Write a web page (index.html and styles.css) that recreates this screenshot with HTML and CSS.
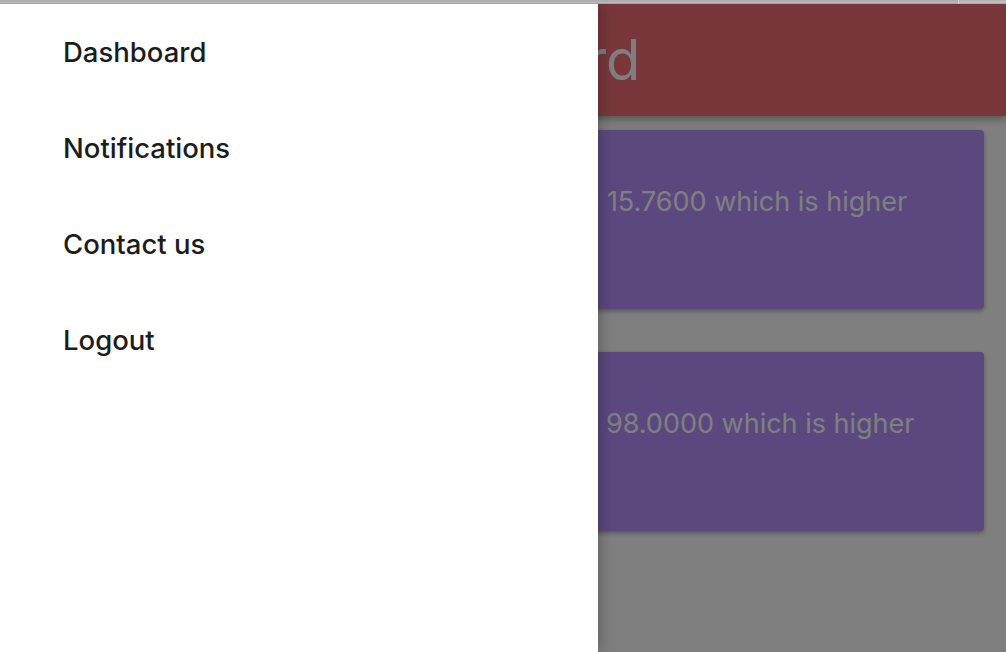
FILE: index.html
```html
<!DOCTYPE html>
<html lang="en">
<head>
<meta charset="utf-8">
<title>Dashboard</title>
<link rel="stylesheet" href="styles.css">
</head>
<body>
<div class="chrome">
  <div class="chrome-main"></div>
  <div class="chrome-end"></div>
</div>
<div class="viewport">
  <div class="page">
    <header class="header"><h1 class="title">Dashboard</h1></header>
    <main class="cards">
      <section class="card"><p class="msg">Sensor A reading is 15.7600 which is higher<br>than the limit</p></section>
      <section class="card"><p class="msg">Sensor B reading is 98.0000 which is higher<br>than the limit</p></section>
    </main>
  </div>
  <div class="scrim"></div>
  <nav class="drawer">
    <a class="nav-item" href="#">Dashboard</a>
    <a class="nav-item" href="#">Notifications</a>
    <a class="nav-item" href="#">Contact us</a>
    <a class="nav-item" href="#">Logout</a>
  </nav>
</div>
</body>
</html>
```
FILE: styles.css
```css
* { box-sizing: border-box; }
html, body { margin: 0; padding: 0; }
body {
  width: 1006px;
  height: 652px;
  overflow: hidden;
  font-family: Inter, "Noto Sans", sans-serif;
  background: #808080;
}
.chrome {
  display: flex;
  height: 4px;
}
.chrome-main {
  flex: 1;
  background: linear-gradient(#a9a9a9, #b9b9b9 60%, #9d9d9d);
}
.chrome-end {
  width: 48px;
  border-left: 1px solid #cfcfcf;
  background: linear-gradient(#b2b2b2, #c0c0c0 60%, #a5a5a5);
}
.viewport {
  position: relative;
  height: 648px;
  overflow: hidden;
}
.page {
  height: 100%;
  background: #ffffff;
}
.header {
  height: 112px;
  background: #f26e76;
  box-shadow: 0 3px 8px rgba(0,0,0,0.35);
  display: flex;
  align-items: center;
  justify-content: center;
  padding-right: 14px;
}
.title {
  margin: 0;
  font-weight: 400;
  font-size: 56px;
  color: #ffffff;
}
.cards {
  display: flex;
  flex-direction: column;
  gap: 43px;
  padding: 14px 22px 0 22px;
}
.card {
  height: 179px;
  background: #b691ff;
  border-radius: 4px;
  box-shadow: 0 2px 5px rgba(0,0,0,0.35);
  padding: 54px 24px 0 329px;
}
.msg {
  margin: 0;
  font-size: 27px;
  line-height: 36px;
  color: #ffffff;
}
.scrim {
  position: absolute;
  inset: 0;
  background: rgba(0,0,0,0.5);
}
.drawer {
  position: absolute;
  top: 0;
  left: 0;
  bottom: 0;
  width: 598px;
  background: #ffffff;
  box-shadow: 2px 0 14px rgba(0,0,0,0.25);
  display: flex;
  flex-direction: column;
  padding: 30px 0 0 63px;
}
.nav-item {
  display: block;
  height: 96px;
  line-height: 36px;
  font-size: 27.5px;
  font-weight: 500;
  color: #1c1c1c;
  text-decoration: none;
}
```
